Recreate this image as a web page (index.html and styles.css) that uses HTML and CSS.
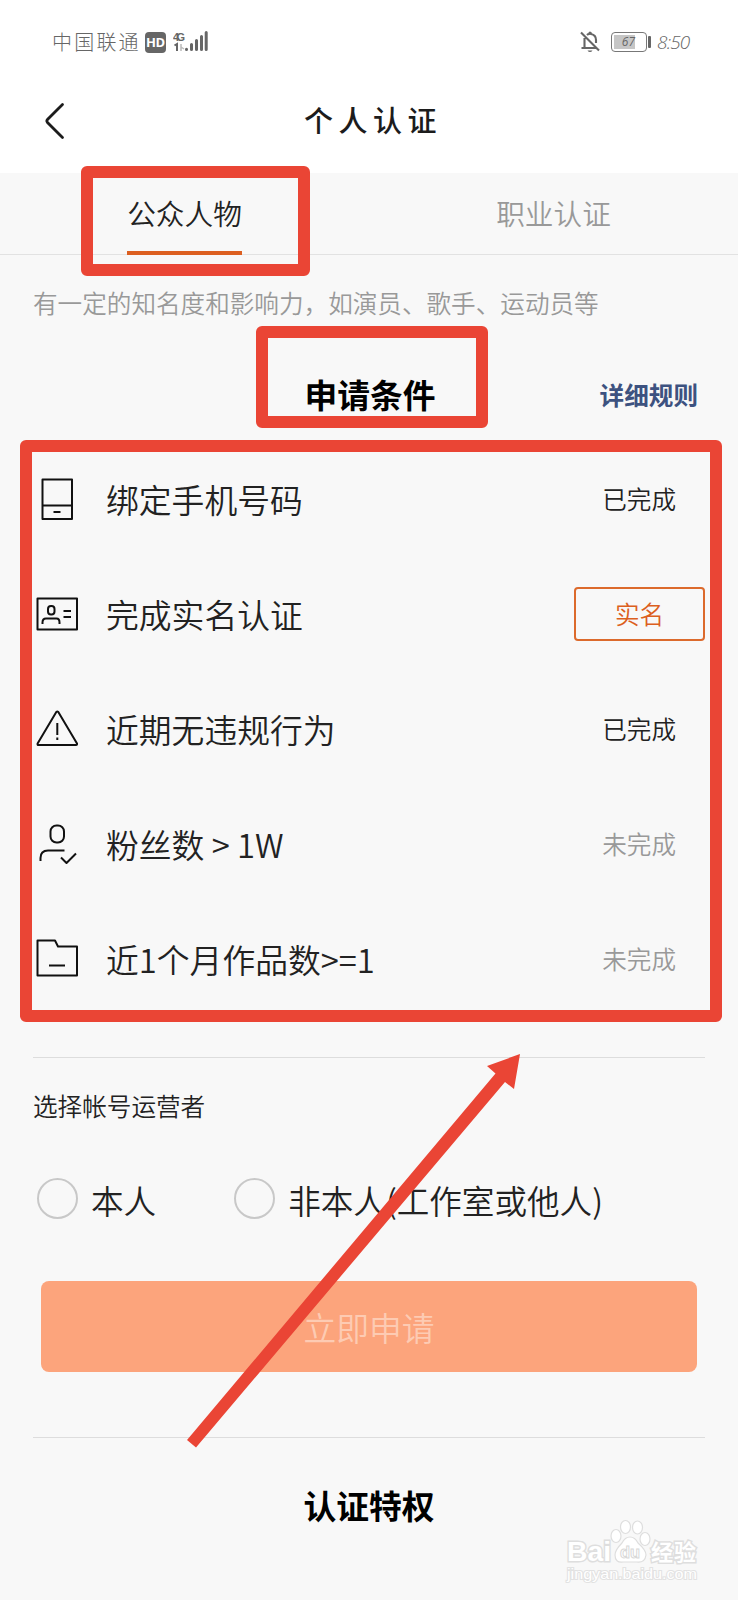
FILE: index.html
```html
<!DOCTYPE html>
<html lang="zh-CN">
<head>
<meta charset="utf-8">
<title>个人认证</title>
<link rel="stylesheet" href="styles.css">
</head>
<body>
<div class="screen">
  <header class="top">
    <div class="status">
      <span class="carrier">中国联通</span>
      <span class="hd">HD</span>
      <svg class="signal" width="36" height="24" viewBox="0 0 36 24">
        <text x="0" y="10.500" class="net" textLength="12">4G</text>
        <path d="M1.500 15.500L4 14V21" fill="none" stroke="#666" stroke-width="2"/>
        <path d="M8 14v7M8 17l3 2" fill="none" stroke="#bbb" stroke-width="1.500"/>
        <path d="M13.500 19.200v0.300M18.500 14.500v5M23.500 10.500v9M28.500 6.500v13M33.200 2.500v17" fill="none" stroke="#666" stroke-width="3" stroke-linecap="round"/>
      </svg>
      <span class="grow"></span>
      <svg class="bell" width="20" height="22" viewBox="0 0 20 22" fill="none" stroke="#666" stroke-width="2.100">
        <path d="M1 1.500L19 19.500M1.500 17H16M4.500 17V7M7 4Q8 3 9 3Q9.500 1.500 10 1.500Q11 1.500 11 3Q16 4 16 9V12"/>
        <path d="M7.500 19.500h5q-1 1.500-2.500 1.500t-2.500-1.500z" fill="#666" stroke="none"/>
      </svg>
      <span class="battery"><span class="level">67</span></span>
      <span class="cap"></span>
      <span class="clock">8:50</span>
    </div>
    <div class="nav">
      <svg class="back" width="22" height="40" viewBox="0 0 22 40"><path d="M18.500 3.500L3.500 18.500Q2.200 20 3.500 21.500L18.500 36.500" fill="none" stroke="#1c1c1c" stroke-width="2.800" stroke-linecap="round"/></svg>
      <h1 class="title">个人认证</h1>
    </div>
  </header>

  <nav class="tabs">
    <div class="tab active"><span>公众人物</span></div>
    <div class="tab"><span>职业认证</span></div>
  </nav>
  <p class="desc">有一定的知名度和影响力，如演员、歌手、运动员等</p>

  <div class="heading"><h2>申请条件</h2><a class="rules">详细规则</a></div>

  <ul class="list">
    <li class="row">
      <svg class="icon" viewBox="0 0 44 44"><path d="M7.500 2.500h29.500v39.500H7.500zM7.500 28.500H37M18.500 35h7"/></svg>
      <span class="label">绑定手机号码</span><span class="state">已完成</span>
    </li>
    <li class="row">
      <svg class="icon" viewBox="0 0 44 44"><path d="M2.500 6.500h39.500v31H2.500z"/><rect x="13" y="14" width="6.500" height="8.500" rx="3"/><path d="M7.500 32V30.500Q7.500 26.500 11 26.500h10.500Q24.500 26.500 24.500 30.500V32M28.500 19H36M28.500 25H36"/></svg>
      <span class="label">完成实名认证</span><span class="verify">实名</span>
    </li>
    <li class="row">
      <svg class="icon" viewBox="0 0 44 44"><path d="M21.300 5Q22.300 4 23.300 5L42 36.500Q42.300 38 41 38H3.500Q2.200 38 2.600 36.500zM22.300 16V28M22.300 30.500v2.500"/></svg>
      <span class="label">近期无违规行为</span><span class="state">已完成</span>
    </li>
    <li class="row">
      <svg class="icon" viewBox="0 0 44 44"><rect x="15.500" y="3.500" width="13.500" height="17" rx="6"/><path d="M5.500 39V36Q5.500 28.500 13 28.500H29.500M26 35.500L31.500 41L41 31.500"/></svg>
      <span class="label">粉丝数 &gt; 1W</span><span class="state todo">未完成</span>
    </li>
    <li class="row">
      <svg class="icon" viewBox="0 0 44 44"><path d="M2.500 3.500H20L23 9.500H42V38.500H2.500zM14 28.500H30"/></svg>
      <span class="label">近1个月作品数&gt;=1</span><span class="state todo">未完成</span>
    </li>
  </ul>

  <section class="operator">
    <h3>选择帐号运营者</h3>
    <div class="options">
      <span class="option"><i class="radio"></i><span>本人</span></span>
      <span class="option"><i class="radio"></i><span>非本人(工作室或他人)</span></span>
    </div>
    <div class="submit"><span>立即申请</span></div>
  </section>

  <section class="privilege"><h2>认证特权</h2></section>

  <div class="mark mark-tab"></div>
  <div class="mark mark-title"></div>
  <div class="mark mark-list"></div>
  <svg class="arrow" width="340" height="400" viewBox="184 1050 340 400"><path d="M520 1054L487 1066L495.500 1073.500L187 1440L196 1447.500L505 1082L514 1089z" fill="#ea4535"/></svg>
  <svg class="watermark" width="150" height="80" viewBox="0 0 150 80">
    <g fill="#fff" stroke="#dedede" stroke-width="1.200">
      <text x="9" y="51" class="wm-big" textLength="44" lengthAdjust="spacingAndGlyphs">Bai</text>
      <ellipse cx="58" cy="26" rx="5" ry="6.500"/><ellipse cx="67.500" cy="17" rx="5" ry="6.500"/><ellipse cx="79.500" cy="17.500" rx="5" ry="6.500"/><ellipse cx="87" cy="29" rx="5" ry="6.500"/>
      <path d="M72 27Q77 27 80 33Q88 40 88 45Q87 53 79 52H65Q57 53 57 45Q57 40 64 33Q67 27 72 27z"/>
      <text x="93" y="50" class="wm-cn" textLength="45">经验</text>
    </g>
    <text x="62" y="48" class="wm-du" textLength="20" lengthAdjust="spacingAndGlyphs">du</text>
    <text x="9" y="69" class="wm-url" textLength="130" lengthAdjust="spacingAndGlyphs">jingyan.baidu.com</text>
  </svg>
</div>
</body>
</html>
```
FILE: styles.css
```css
* { box-sizing: border-box; margin: 0; padding: 0; }
body { background: #f8f8f8; color: #222; font-family: "Noto Sans CJK SC", sans-serif; font-weight: 350; }
.screen { position: relative; width: 738px; height: 1600px; overflow: hidden; background: #f8f8f8; }

.top { height: 173px; background: #fff; }
.status { display: flex; align-items: center; height: 84px; padding: 0 46px 0 52px; color: #666; }
.carrier { font-size: 20px; line-height: 24px; letter-spacing: 2.200px; font-weight: 300; }
.hd { width: 21px; height: 21px; margin-left: 4px; border-radius: 4px; background: #666; color: #fff; font: bold 13px/21px "Open Sans", sans-serif; text-align: center; letter-spacing: -0.500px; }
.signal { margin-left: 7px; }
.net { font: bold 11px "Liberation Sans", sans-serif; fill: #666; }
.grow { flex: 1; }
.battery { width: 36px; height: 20px; margin-left: 11px; padding: 2px; border: 1.500px solid #777; border-radius: 4px; }
.level { display: block; width: 21px; height: 14px; background: #c6c6c6; font: italic 12px/14px "Open Sans", sans-serif; text-align: right; color: #666; }
.cap { width: 3px; height: 12px; margin-left: 1px; border-radius: 1px; background: #666; }
.clock { width: 35px; margin-left: 6px; font: italic 300 19px/24px "Open Sans", sans-serif; letter-spacing: -0.800px; }
.nav { display: flex; align-items: center; height: 74px; padding-left: 44px; }
.title { margin: -4px 0 0 238px; font-size: 29px; line-height: 40px; font-weight: 500; letter-spacing: 5.500px; color: #1c1c1c; }

.tabs { display: flex; height: 82px; border-bottom: 1px solid #e2e2e2; font-size: 28.700px; line-height: 40px; }
.tab { flex: 1; display: flex; justify-content: center; color: #999; }
.tab span { height: 82px; padding-top: 20px; }
.tab.active { color: #222; }
.tab.active span { border-bottom: 4px solid #dc5f20; }

.desc { padding: 29px 33px 0; font-size: 24.600px; line-height: 36px; color: #999; white-space: nowrap; }
.heading { display: grid; grid-template-columns: 1fr auto 1fr; align-items: center; height: 48px; margin: 50px 40px 0 42px; color: #000; }
h2 { font-size: 32.800px; line-height: 48px; font-weight: 700; }
.heading h2 { grid-column: 2; }
.rules { justify-self: end; font-size: 24.600px; font-weight: 700; color: #3d5280; }

.list { list-style: none; margin: 23px 33px 0 35px; }
.row { display: flex; align-items: center; height: 115px; }
.icon { width: 44px; height: 44px; flex: none; fill: none; stroke: #111; stroke-width: 2; stroke-linejoin: round; }
.label { flex: 1; margin-left: 27px; font-size: 32.800px; line-height: 48px; }
.state { margin: -1px 29px 0 0; font-size: 24.600px; }
.todo { color: #999; }
.verify { width: 131px; height: 54px; border: 2px solid #dc6a2c; border-radius: 4px; color: #dc5f20; font-size: 24.600px; line-height: 49px; text-align: center; }

.operator { margin: 41px 33px 0; padding-top: 29px; border-top: 1px solid #ddd; }
h3 { font-size: 24.600px; line-height: 36px; font-weight: 350; }
.options { display: flex; gap: 78px; margin-top: 53px; padding-left: 4px; font-size: 32.600px; line-height: 48px; }
.option { display: flex; align-items: center; gap: 13px; }
.radio { width: 41px; height: 41px; margin-top: -3px; border: 2px solid #c8c8c8; border-radius: 50%; }
.submit { height: 91px; margin: 57px 8px 0; border-radius: 8px; background: #fca47c; color: #fdcbb3; font-size: 32.800px; line-height: 92px; text-align: center; }
.privilege { margin: 65px 33px 0; padding-top: 43px; border-top: 1px solid #ddd; text-align: center; color: #000; }

.mark { position: absolute; border: 12px solid #ea4535; border-radius: 6px; }
.mark-tab { left: 81px; top: 165.500px; width: 229px; height: 110.500px; }
.mark-title { left: 255.500px; top: 325.500px; width: 232.500px; height: 102px; }
.mark-list { left: 19.500px; top: 439.500px; width: 702px; height: 582.500px; }
.arrow { position: absolute; left: 184px; top: 1050px; }
.watermark { position: absolute; left: 558px; top: 1510px; }
.wm-big { font: bold 28px "Liberation Sans", sans-serif; paint-order: stroke; stroke-width: 3px; }
.wm-cn { font: bold 22px "Noto Sans CJK SC", sans-serif; paint-order: stroke; stroke-width: 3px; }
.wm-du { font: bold 17px "Liberation Sans", sans-serif; fill: #fff; stroke: #d8d8d8; stroke-width: 1px; }
.wm-url { font: 15px "Liberation Sans", sans-serif; fill: #fff; stroke: #e2e2e2; stroke-width: 2px; paint-order: stroke; }
```
